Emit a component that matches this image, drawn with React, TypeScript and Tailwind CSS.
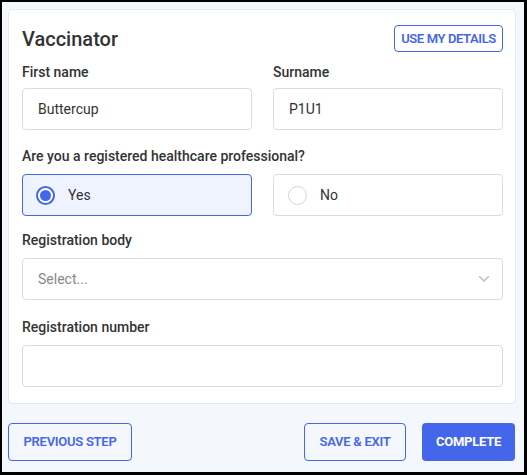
import { useState } from "react"

const blue = "#4466ea"

function Label({ children, className = "" }: { children: string; className?: string }) {
	return (
		<div className={`text-[14px] leading-5 font-medium text-[#333] ${className}`}>
			{children}
		</div>
	)
}

function TextField({ value }: { value: string }) {
	return (
		<div className="flex h-[42px] items-center rounded-[4px] border border-[#dcdcdc] bg-white pl-[15px] text-[14px] text-[#333]">
			{value}
		</div>
	)
}

function RadioOption({
	label,
	checked,
	onSelect,
}: {
	label: string
	checked: boolean
	onSelect: () => void
}) {
	return (
		<button
			type="button"
			onClick={onSelect}
			className={`flex h-[42px] items-center rounded-[4px] border text-left text-[14px] text-[#333] ${
				checked ? "border-[#4466ea] bg-[#eef3fe] pl-[13px]" : "border-[#dcdcdc] bg-white pl-[14px]"
			}`}
		>
			{checked ? (
				<span className="flex size-[19px] items-center justify-center rounded-full border-2 border-[#4466ea] bg-white">
					<span className="size-[11px] rounded-full bg-[#4466ea]" />
				</span>
			) : (
				<span className="size-[19px] rounded-full border border-[#d6d6d6] bg-white" />
			)}
			<span className="ml-[13px]">{label}</span>
		</button>
	)
}

export default function App() {
	const [registered, setRegistered] = useState(true)

	return (
		<div
			className="flex h-[475px] w-[527px] flex-col border-t-2 border-r-[3px] border-b-[3px] border-l-2 border-black bg-[#f4f7fb] pt-[7px] pr-[8px] pl-[6px]"
			style={{ fontFamily: "Roboto, 'Liberation Sans', sans-serif" }}
		>
			<div className="rounded-[5px] border border-[#e4e8ee] bg-white pt-[15px] pr-[12px] pb-[16px] pl-[13px]">
				<div className="flex h-[27px] items-center justify-between">
					<h1 className="text-[20px] leading-none font-medium text-[#333]">Vaccinator</h1>
					<button
						type="button"
						className="flex h-[27px] w-[109px] items-center justify-center rounded-[4px] border border-[#4466ea] text-[13px] font-semibold tracking-[-0.03em] text-[#4466ea]"
					>
						USE MY DETAILS
					</button>
				</div>

				<div className="mt-[10px] grid grid-cols-2 gap-x-[21px]">
					<div>
						<Label className="mb-1.5">First name</Label>
						<TextField value="Buttercup" />
					</div>
					<div>
						<Label className="mb-1.5">Surname</Label>
						<TextField value="P1U1" />
					</div>
				</div>

				<Label className="mt-4 mb-2">Are you a registered healthcare professional?</Label>
				<div className="grid grid-cols-2 gap-x-[21px]">
					<RadioOption label="Yes" checked={registered} onSelect={() => setRegistered(true)} />
					<RadioOption label="No" checked={!registered} onSelect={() => setRegistered(false)} />
				</div>

				<Label className="mt-[14px] mb-2">Registration body</Label>
				<div className="flex h-[42px] items-center justify-between rounded-[4px] border border-[#dcdcdc] bg-white pr-[12px] pl-[15px] text-[14px] text-[#888]">
					<span>Select...</span>
					<svg width="12" height="8" viewBox="0 0 12 8" fill="none">
						<path d="M1.5 1.5 6 6l4.5-4.5" stroke="#c4c4c4" strokeWidth="1.6" strokeLinecap="round" />
					</svg>
				</div>

				<Label className="mt-[17px] mb-2">Registration number</Label>
				<TextField value="" />
			</div>

			<div className="mt-[19px] mr-[1px] flex items-center">
				<button
					type="button"
					className="flex h-[38px] w-[124px] items-center justify-center rounded-[4px] border border-[#4466ea] text-[13px] font-semibold tracking-[-0.02em] text-[#4466ea]"
				>
					PREVIOUS STEP
				</button>
				<div className="ml-auto flex gap-4">
					<button
						type="button"
						className="flex h-[38px] w-[102px] items-center justify-center rounded-[4px] border border-[#4466ea] text-[13px] font-semibold tracking-[-0.02em] text-[#4466ea]"
					>
						SAVE &amp; EXIT
					</button>
					<button
						type="button"
						className="flex h-[38px] w-[93px] items-center justify-center rounded-[4px] text-[13px] font-bold tracking-[-0.02em] text-white"
						style={{ backgroundColor: blue }}
					>
						COMPLETE
					</button>
				</div>
			</div>
		</div>
	)
}
